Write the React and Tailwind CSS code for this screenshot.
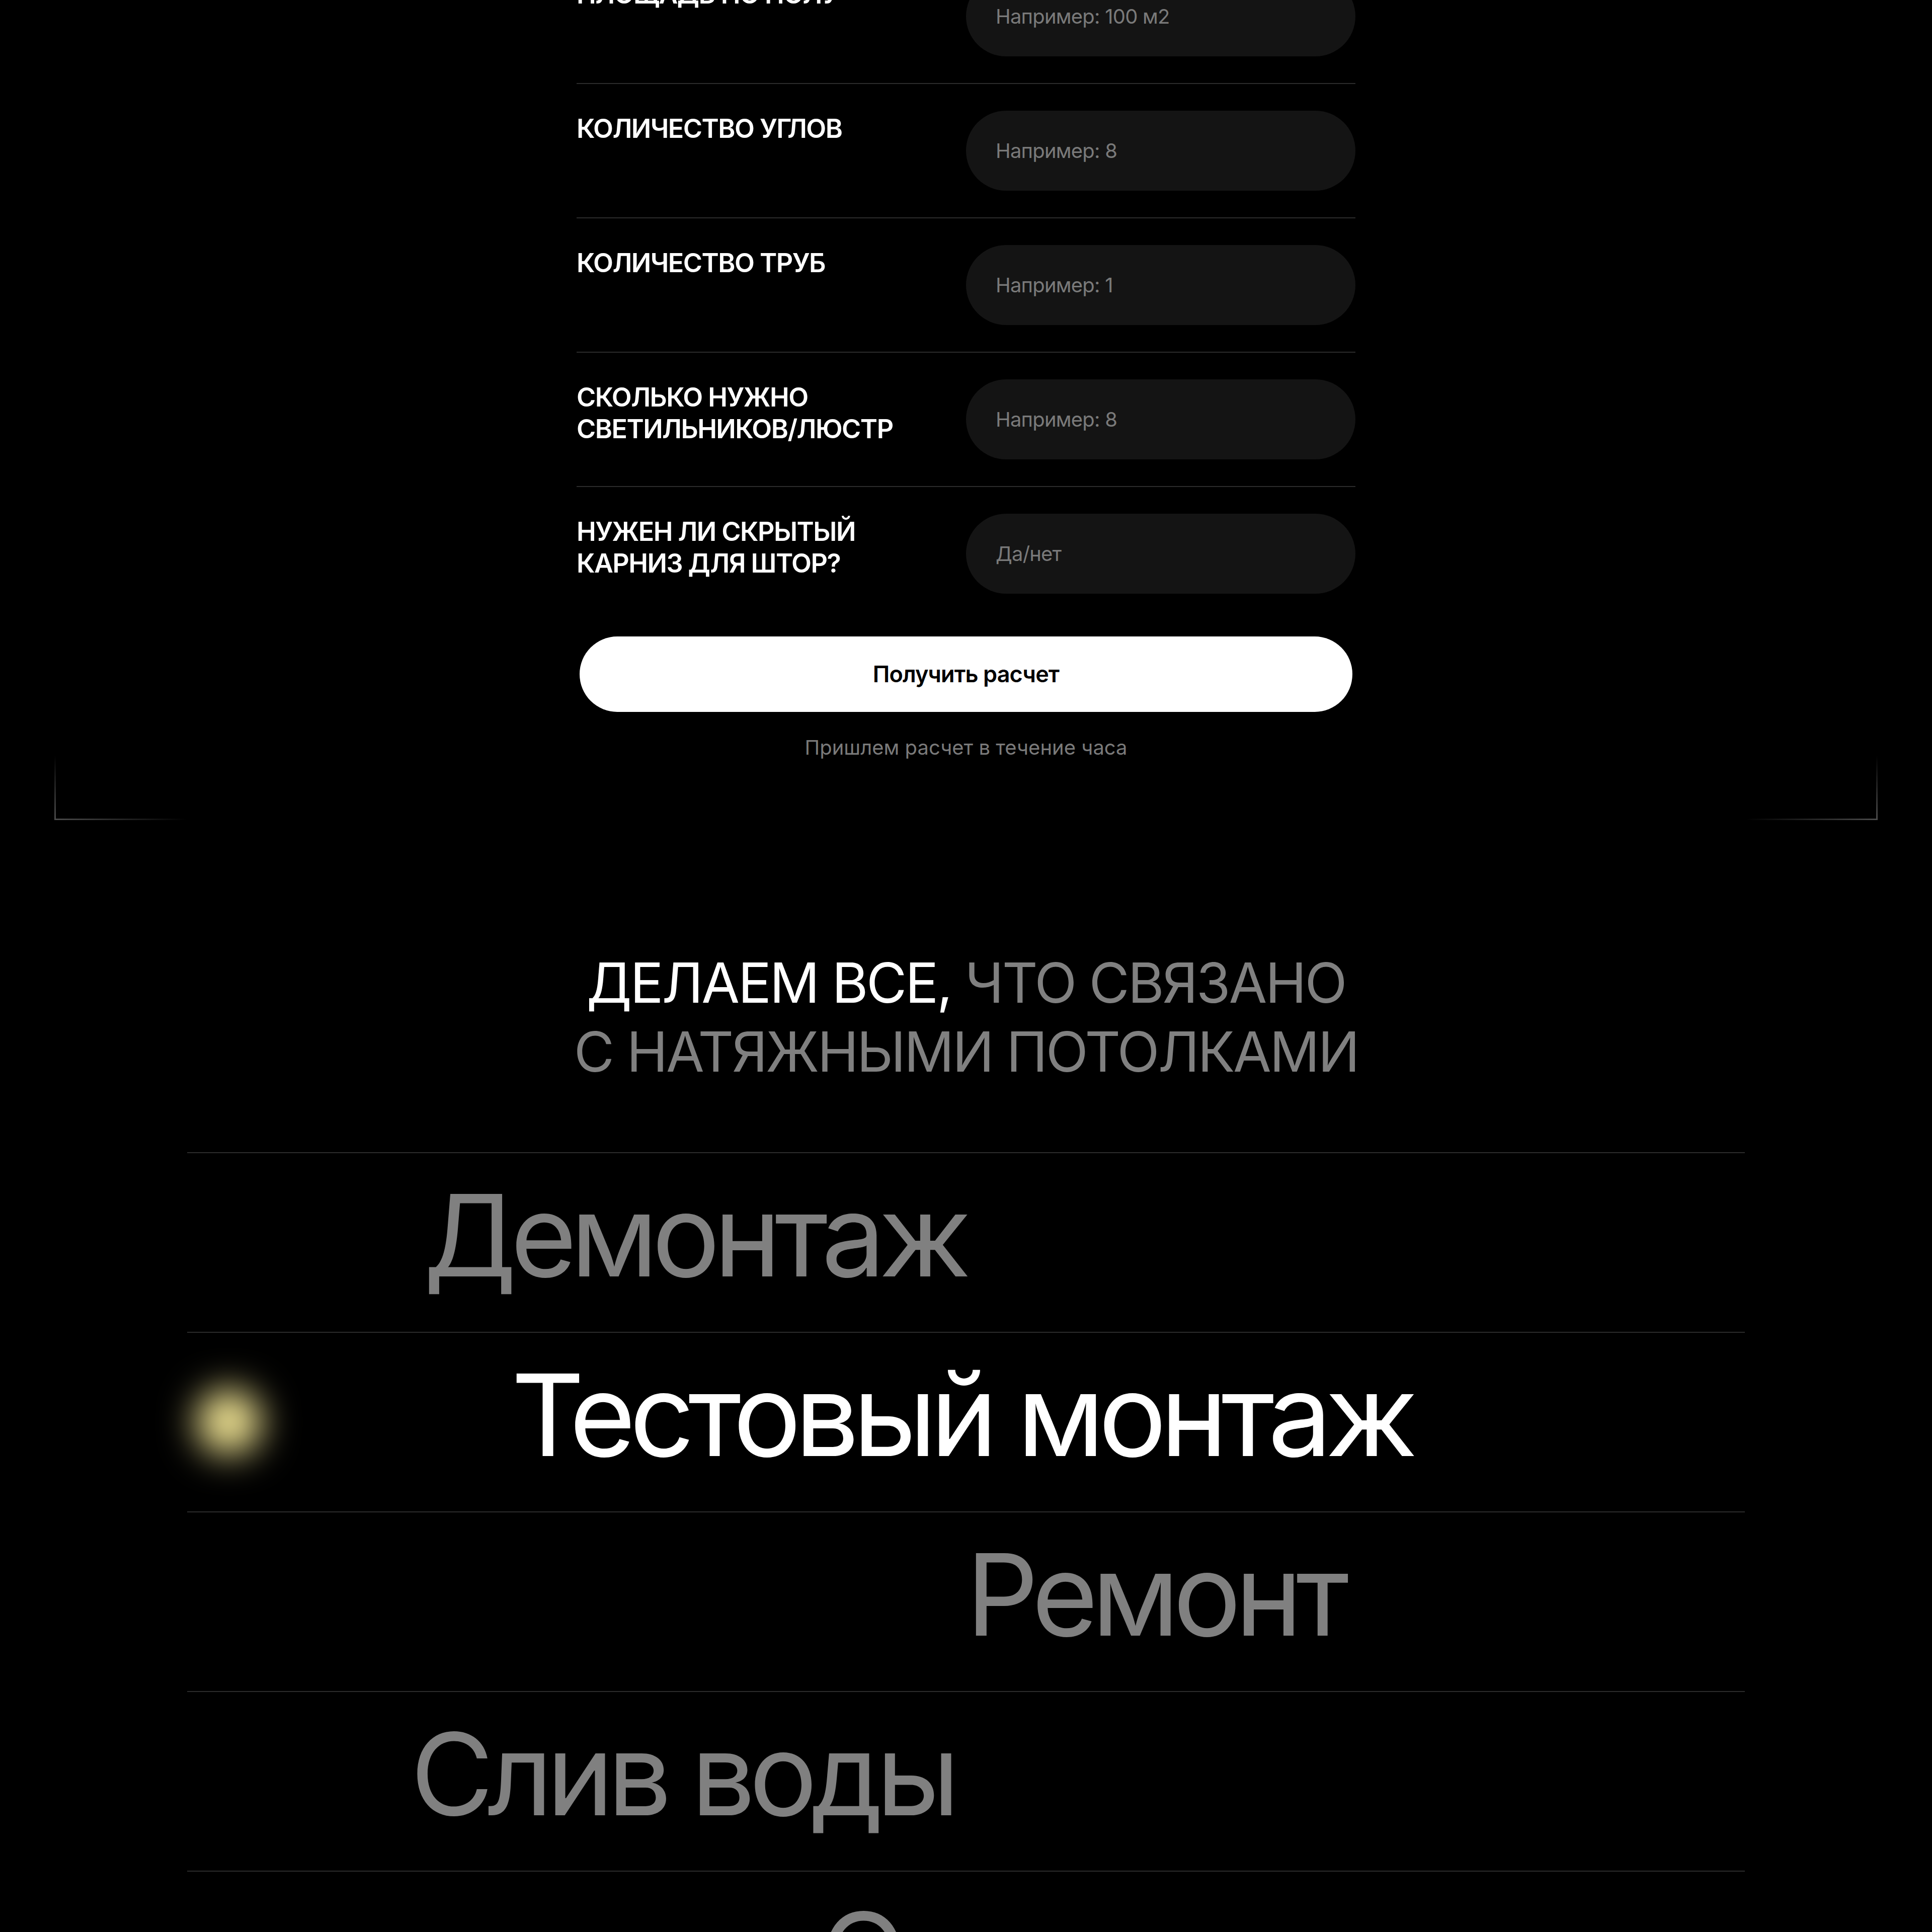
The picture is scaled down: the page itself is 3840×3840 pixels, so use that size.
import React from 'react';

const fields = [
  { label: 'Площадь по полу', placeholder: 'Например: 100 м2' },
  { label: 'Количество углов', placeholder: 'Например: 8' },
  { label: 'Количество труб', placeholder: 'Например: 1' },
  { label: <>Сколько нужно<br />светильников/люстр</>, placeholder: 'Например: 8' },
  { label: <>Нужен ли скрытый<br />карниз для штор?</>, placeholder: 'Да/нет' },
];

const services = [
  { name: 'Демонтаж', pad: 'pl-[470px]', active: false },
  { name: 'Тестовый монтаж', pad: 'pl-[644px]', active: true },
  { name: 'Ремонт', pad: 'pl-[1548px]', active: false },
  { name: 'Слив воды', pad: 'pl-[444px]', active: false },
  { name: 'Освещение', pad: 'pl-[1258px]', active: false },
];

function Corner({ side }) {
  const right = side === 'right';
  return (
    <div className={`absolute bottom-0 ${right ? 'right-0 items-end' : 'left-0 items-start'} flex flex-col`}>
      <div className="w-[3px] h-[125px] bg-linear-to-t from-[#4a4a4a] to-transparent" />
      <div className={`h-[3px] w-[262px] ${right ? 'bg-linear-to-l' : 'bg-linear-to-r'} from-[#4a4a4a] to-transparent`} />
    </div>
  );
}

function CalcForm() {
  return (
    <section className="relative mx-[108px] pb-[121px]">
      <div className="w-[1548px] mx-auto -mt-[100px]">
        {fields.map((f, i) => (
          <div key={i} className={`flex justify-between items-start py-[53px] ${i < fields.length - 1 ? 'border-b-2 border-[#2c2c2c]' : ''}`}>
            <label className="pt-[4px] text-[52px] leading-[63px] font-semibold uppercase tracking-[-0.03em] text-white">
              {f.label}
            </label>
            <input
              type="text"
              placeholder={f.placeholder}
              className="w-[774px] h-[159px] rounded-full bg-[#141414] pl-[59px] pr-[40px] text-[40px] tracking-[-0.02em] text-white placeholder:text-[#7a7a7a] outline-none"
            />
          </div>
        ))}
        <button className="block mx-[6px] mt-[32px] w-[1536px] h-[150px] rounded-full bg-white text-black text-[45px] font-semibold tracking-[-0.02em]">
          Получить расчет
        </button>
        <p className="mt-[48px] text-center text-[40px] leading-[46px] text-[#7a7a7a]">
          Пришлем расчет в течение часа
        </p>
      </div>
      <Corner side="left" />
      <Corner side="right" />
    </section>
  );
}

function Services() {
  return (
    <section className="mt-[255px]">
      <h2 className="text-center text-[110px] leading-[137px] uppercase tracking-[-0.03em] text-white">
        Делаем все, <span className="text-[#808080]">что связано<br />с натяжными потолками</span>
      </h2>
      <div className="mt-[131px] w-[3096px] mx-auto border-t-2 border-[#2c2c2c]">
        {services.map((s) => (
          <div key={s.name} className={`relative h-[357px] border-b-2 border-[#2c2c2c] pt-[50px] ${s.pad}`}>
            {s.active && (
              <div className="absolute left-[18px] top-[112px] w-[130px] h-[130px] rounded-full bg-[#f2e594] blur-[36px]" />
            )}
            <span className={`block text-[226px] leading-none tracking-[-0.055em] whitespace-nowrap ${s.active ? 'text-white' : 'text-[#808080]'}`}>
              {s.name}
            </span>
          </div>
        ))}
      </div>
    </section>
  );
}

export default function App() {
  return (
    <div className="w-full h-[3840px] overflow-hidden bg-black font-['Inter',sans-serif]">
      <CalcForm />
      <Services />
    </div>
  );
}
